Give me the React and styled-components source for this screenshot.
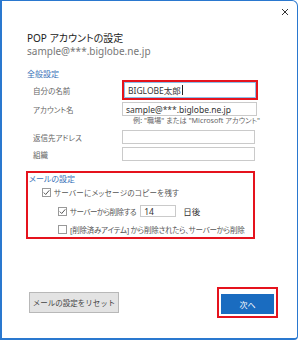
import styled, { createGlobalStyle } from 'styled-components';

const GlobalStyle = createGlobalStyle`
  html, body {
    margin: 0;
    padding: 0;
    background: #ffffff;
  }
  body {
    font-family: "Noto Sans", "Noto Sans CJK JP", sans-serif;
    font-feature-settings: "palt";
    color: #555;
  }
`;

const Dialog = styled.div`
  box-sizing: border-box;
  width: 298px;
  height: 340px;
  border: 1px solid #2a78cf;
  border-left-width: 2px;
  border-bottom-width: 2px;
  border-radius: 0 6px 4px 0;
  background: #fff;
  display: flex;
  flex-direction: column;
`;

const TopBar = styled.div`
  height: 22px;
  display: flex;
  justify-content: flex-end;
  align-items: center;
  padding-right: 5px;
`;

const CloseBtn = styled.button`
  width: 14px;
  height: 14px;
  padding: 0;
  border: 0;
  background: none;
  display: flex;
  align-items: center;
  justify-content: center;
`;

const Content = styled.div`
  padding: 0 19px 0 25px;
  display: flex;
  flex-direction: column;
  flex: 1;
`;

const Title = styled.div`
  margin-top: 8px;
  font-size: 10px;
  line-height: 14px;
  color: #222;
`;

const Sub = styled.div`
  font-size: 10px;
  line-height: 13px;
  color: #777;
`;

const Section = styled.div`
  font-size: 8px;
  line-height: 12px;
  color: #3a72b8;
  margin-top: ${(p) => p.$top || 0}px;
`;

const FormGrid = styled.div`
  display: grid;
  grid-template-columns: 89px 1fr;
  align-items: center;
  justify-items: start;
  padding-left: 6px;
`;

const Label = styled.div`
  font-size: 7.5px;
  color: #666;
  margin-top: ${(p) => p.$top || 0}px;
  white-space: nowrap;
`;

const Highlight = styled.div`
  border: 2px solid #e5131d;
  margin-top: ${(p) => p.$top || 0}px;
`;

const Input = styled.div`
  box-sizing: border-box;
  height: ${(p) => p.$h || 14}px;
  width: ${(p) => p.$w || 134}px;
  border: 1px solid ${(p) => (p.$focus ? '#8cbde8' : '#cacaca')};
  background: #fff;
  font-size: 8.5px;
  color: #333;
  padding: 0 3px;
  display: flex;
  align-items: center;
  margin-top: ${(p) => p.$top || 0}px;
  margin-left: ${(p) => p.$left || 0}px;
  white-space: nowrap;
  letter-spacing: 0;
`;

const Caret = styled.span`
  display: inline-block;
  width: 1px;
  height: 10px;
  background: #222;
  margin-left: 1px;
`;

const Hint = styled.div`
  grid-column: 2;
  font-size: 7.2px;
  line-height: 9px;
  color: #666;
  padding-left: 11px;
  white-space: nowrap;
`;

const MailBox = styled.div`
  margin-top: 10px;
  margin-left: -1px;
  width: 229px;
  box-sizing: border-box;
  border: 2px solid #e5131d;
  padding-left: 1px;
`;

const CheckRow = styled.div`
  display: flex;
  align-items: center;
  height: ${(p) => p.$h}px;
  padding-left: ${(p) => p.$indent}px;
  font-size: 7.5px;
  letter-spacing: ${(p) => p.$ls || 0}px;
  color: #555;
  white-space: nowrap;
`;

const Box = styled.span`
  box-sizing: border-box;
  width: 9px;
  height: 9px;
  border: 1px solid #999;
  background: #fff;
  margin-right: 3px;
  display: flex;
  align-items: center;
  justify-content: center;
  flex: none;
`;

const Days = styled.span`
  margin-left: 7px;
  font-size: 8.5px;
  letter-spacing: 0;
  color: #333;
`;

const Footer = styled.div`
  margin-top: auto;
  margin-bottom: 20px;
  display: flex;
  justify-content: space-between;
  align-items: center;
`;

const ResetBtn = styled.button`
  box-sizing: border-box;
  width: 90px;
  height: 21px;
  margin-left: 2px;
  border: 1px solid #b8b8b8;
  background: #e3e3e3;
  font-family: inherit;
  font-size: 7.5px;
  color: #444;
  padding: 0;
`;

const NextWrap = styled.div`
  border: 2px solid #e5131d;
  padding: 2px;
`;

const NextBtn = styled.button`
  box-sizing: border-box;
  width: 53px;
  height: 20px;
  border: 0;
  background: #1a6cc0;
  color: #fff;
  font-family: inherit;
  font-size: 8px;
  padding: 0;
`;

function Check({ checked }) {
  return (
    <Box>
      {checked && (
        <svg width="7" height="7" viewBox="0 0 7 7">
          <polyline points="0.8,3.6 2.7,5.5 6.3,1.3" fill="none" stroke="#444" strokeWidth="0.9" />
        </svg>
      )}
    </Box>
  );
}

export default function App() {
  return (
    <>
      <GlobalStyle />
      <Dialog>
        <TopBar>
          <CloseBtn aria-label="close">
            <svg width="8" height="8" viewBox="0 0 8 8">
              <path d="M1 1 L7 7 M7 1 L1 7" stroke="#333" strokeWidth="1" />
            </svg>
          </CloseBtn>
        </TopBar>
        <Content>
          <Title>POP アカウントの設定</Title>
          <Sub>sample@***.biglobe.ne.jp</Sub>
          <Section $top={10}>全般設定</Section>
          <FormGrid>
            <Label>自分の名前</Label>
            <Highlight>
              <Input $focus $h={16} $w={132}>
                BIGLOBE太郎<Caret />
              </Input>
            </Highlight>
            <Label $top={2}>アカウント名</Label>
            <Input $top={2} $w={135}>sample@***.biglobe.ne.jp</Input>
            <Hint>例: "職場" または "Microsoft アカウント"</Hint>
            <Label $top={5}>返信先アドレス</Label>
            <Input $top={5} $w={133}></Input>
            <Label $top={3}>組織</Label>
            <Input $top={3} $w={133}></Input>
          </FormGrid>
          <MailBox>
            <Section>メールの設定</Section>
            <CheckRow $indent={13} $h={15} $ls={0.3}>
              <Check checked />
              サーバーにメッセージのコピーを残す
            </CheckRow>
            <CheckRow $indent={29} $h={22} $ls={-0.5}>
              <Check checked />
              サーバーから削除する
              <Input $w={36} $h={12} $left={4}>14</Input>
              <Days>日後</Days>
            </CheckRow>
            <CheckRow $indent={29} $h={15} $ls={-0.25}>
              <Check />
              [削除済みアイテム] から削除されたら、サーバーから削除
            </CheckRow>
          </MailBox>
          <Footer>
            <ResetBtn>メールの設定をリセット</ResetBtn>
            <NextWrap>
              <NextBtn>次へ</NextBtn>
            </NextWrap>
          </Footer>
        </Content>
      </Dialog>
    </>
  );
}
